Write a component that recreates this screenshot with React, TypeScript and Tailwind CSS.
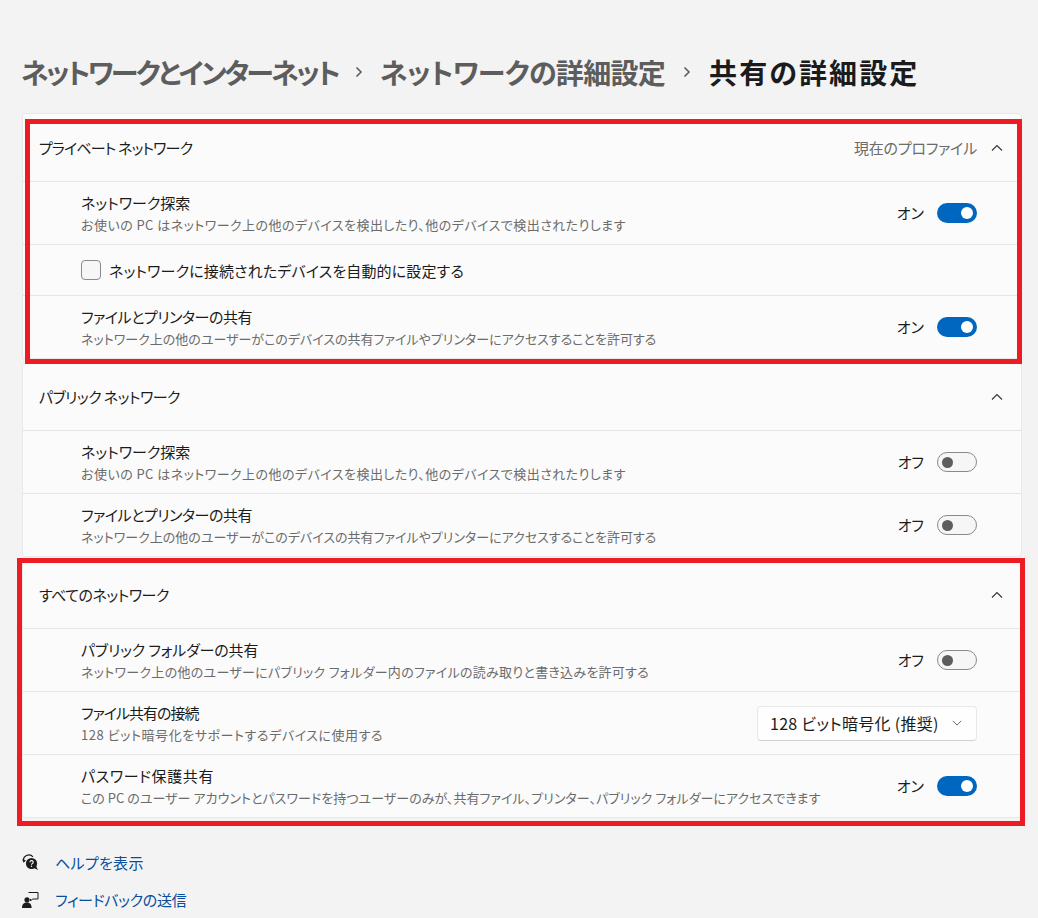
import { ReactNode } from "react";

function Chevron({ className }: { className: string }) {
  return (
    <svg className={className} viewBox="0 0 12 12" fill="none" stroke="currentColor" strokeWidth={1.1}>
      <path d="M1 8.5 6 3.5l5 5" />
    </svg>
  );
}

function Crumb() {
  return (
    <svg className="w-[10px] h-[14px] text-[#5d5d5d]" viewBox="0 0 10 14" fill="none" stroke="currentColor" strokeWidth={1.6}>
      <path d="M2.5 2.5 7 7l-4.5 4.5" />
    </svg>
  );
}

function Toggle({ on }: { on: boolean }) {
  return on ? (
    <div className="w-10 h-5 rounded-full bg-[#0067c0] flex items-center justify-end pr-1">
      <div className="w-3 h-3 rounded-full bg-white" />
    </div>
  ) : (
    <div className="w-10 h-5 rounded-full bg-[#f6f6f6] border border-[#8a8a8a] flex items-center pl-[4px]">
      <div className="w-[11px] h-[11px] rounded-full bg-[#5d5d5d]" />
    </div>
  );
}

interface RowProps {
  title: string;
  desc: string;
  titleClass?: string;
  descClass?: string;
}

function Row({ title, desc, titleClass, descClass, children }: RowProps & { children: ReactNode }) {
  return (
    <div className="h-[63px] border-t border-[#e5e5e5] flex items-center pl-[58px] pr-[44px]">
      <div className="flex-1 min-w-0">
        <div className={`text-[15px] leading-[20px] text-[#1b1b1b] ${titleClass ?? ""}`}>{title}</div>
        <div className={`text-[13px] leading-[18px] text-[#6b6b6b] mt-[3px] ${descClass ?? ""}`}>{desc}</div>
      </div>
      {children}
    </div>
  );
}

function SwitchRow({ on, ...row }: RowProps & { on: boolean }) {
  return (
    <Row {...row}>
      <div className="flex items-center">
        <span className="text-[15px] text-[#1b1b1b] mr-[13px]">{on ? "オン" : "オフ"}</span>
        <Toggle on={on} />
      </div>
    </Row>
  );
}

function Card({ title, titleClass, extra, children }: { title: string; titleClass: string; extra?: string; children: ReactNode }) {
  return (
    <section className="bg-[#fbfbfb] border border-[#e8e8e8] rounded-[4px] overflow-hidden">
      <div className="h-[67px] flex items-center pl-[16px] pr-[18px]">
        <span className={`flex-1 text-[15px] text-[#1b1b1b] pt-[2px] ${titleClass}`}>{title}</span>
        {extra && <span className="text-[15px] text-[#6b6b6b] mr-[14px] tracking-[-0.2px] pt-[2px]">{extra}</span>}
        <Chevron className="w-3 h-3 text-[#333333]" />
      </div>
      {children}
    </section>
  );
}

const DISCOVERY_DESC = "お使いの PC はネットワーク上の他のデバイスを検出したり、他のデバイスで検出されたりします";
const SHARING_DESC = "ネットワーク上の他のユーザーがこのデバイスの共有ファイルやプリンターにアクセスすることを許可する";

export default function App() {
  return (
    <div className="relative h-[918px] overflow-hidden bg-[#f3f3f3] pl-[22px] pr-[16px] font-['Noto_Sans_CJK_JP',sans-serif] [font-feature-settings:'palt']">
      <h1 className="h-[113px] pt-[49px] -ml-px flex items-start text-[28px] leading-[46px] font-bold">
        <span className="text-[#5d5d5d] tracking-[-2.7px]">ネットワークとインターネット</span>
        <span className="h-[46px] w-[42px] flex items-center justify-center"><Crumb /></span>
        <span className="text-[#5d5d5d] tracking-[-0.7px]">ネットワークの詳細設定</span>
        <span className="h-[46px] w-[44px] flex items-center justify-center"><Crumb /></span>
        <span className="text-[#1b1b1b] tracking-[2.1px]">共有の詳細設定</span>
      </h1>

      <div className="flex flex-col gap-[3px]">
        <Card title="プライベート ネットワーク" titleClass="tracking-[-0.85px]" extra="現在のプロファイル">
          <SwitchRow title="ネットワーク探索" desc={DISCOVERY_DESC} descClass="tracking-[0.45px]" on />
          <div className="h-[51px] border-t border-[#e5e5e5] flex items-center pl-[58px]">
            <div className="w-5 h-5 rounded-[4px] border border-[#8a8a8a] bg-[#f6f6f6] mr-2" />
            <span className="text-[15px] text-[#1b1b1b] tracking-[0.15px] pt-[2px]">ネットワークに接続されたデバイスを自動的に設定する</span>
          </div>
          <SwitchRow title="ファイルとプリンターの共有" titleClass="tracking-[-0.45px]" desc={SHARING_DESC} on />
        </Card>

        <Card title="パブリック ネットワーク" titleClass="tracking-[-0.55px]">
          <SwitchRow title="ネットワーク探索" desc={DISCOVERY_DESC} descClass="tracking-[0.45px]" on={false} />
          <SwitchRow title="ファイルとプリンターの共有" titleClass="tracking-[-0.45px]" desc={SHARING_DESC} on={false} />
        </Card>

        <Card title="すべてのネットワーク" titleClass="tracking-[-0.5px]">
          <SwitchRow
            title="パブリック フォルダーの共有"
            titleClass="tracking-[-0.15px]"
            desc="ネットワーク上の他のユーザーにパブリック フォルダー内のファイルの読み取りと書き込みを許可する"
            descClass="tracking-[0.27px]"
            on={false}
          />
          <Row
            title="ファイル共有の接続"
            titleClass="tracking-[-1px]"
            desc="128 ビット暗号化をサポートするデバイスに使用する"
            descClass="tracking-[0.55px]"
          >
            <div className="w-[220px] h-[35px] rounded-[4px] bg-[#fefefe] border border-[#e8e8e8] border-b-[#d2d2d2] flex items-center pl-[12px] pr-[14px]">
              <span className="flex-1 text-[16px] text-[#1b1b1b] tracking-[0.3px]">128 ビット暗号化 (推奨)</span>
              <Chevron className="w-[10px] h-[10px] text-[#5d5d5d] rotate-180" />
            </div>
          </Row>
          <SwitchRow
            title="パスワード保護共有"
            titleClass="tracking-[0.6px]"
            desc="この PC のユーザー アカウントとパスワードを持つユーザーのみが、共有ファイル、プリンター、パブリック フォルダーにアクセスできます"
            descClass="tracking-[0.03px]"
            on
          />
        </Card>
      </div>

      <div className="mt-[27px] flex items-center h-[36px]">
        <svg className="w-[18px] h-[18px] text-[#1b1b1b]" viewBox="0 0 18 18">
          <path d="M1.5 7.5A5.5 5.5 0 0 1 11 2.8" fill="none" stroke="currentColor" strokeWidth={1.1} />
          <path d="M.3 5 1.6 8.8 4 6.4z" fill="currentColor" />
          <circle cx="9.5" cy="9.5" r="5.6" fill="currentColor" />
          <path d="M12 14l4 2-2-4z" fill="currentColor" />
          <path d="M8 8.2a1.6 1.6 0 1 1 2.4 1.4c-.6.3-.9.6-.9 1.1" fill="none" stroke="white" strokeWidth={1.1} />
          <circle cx="9.5" cy="12.2" r=".7" fill="white" />
        </svg>
        <a className="ml-[15px] text-[15px] text-[#0a4d9e] tracking-[0.3px]">ヘルプを表示</a>
      </div>
      <div className="flex items-center h-[37px] pt-[1px]">
        <svg className="w-[18px] h-[18px] text-[#1b1b1b]" viewBox="0 0 18 18">
          <circle cx="5" cy="8.8" r="2.6" fill="currentColor" />
          <path d="M0 17c0-4 2-5.5 4.8-5.5S9.6 13 9.6 17z" fill="currentColor" />
          <path d="M6.5 1.5h9.5V8h-5.5l-2 2V8" fill="none" stroke="currentColor" strokeWidth={1} />
        </svg>
        <a className="ml-[15px] text-[15px] text-[#0a4d9e] tracking-[-0.3px]">フィードバックの送信</a>
      </div>

      {/* red annotation frames drawn over the screenshot */}
      <div className="absolute left-[25px] top-[119px] w-[997px] h-[245px] border-[5px] border-[#ed1c24] pointer-events-none" />
      <div className="absolute left-[17px] top-[558px] w-[1008px] h-[268px] border-[5px] border-[#ed1c24] pointer-events-none" />
    </div>
  );
}
